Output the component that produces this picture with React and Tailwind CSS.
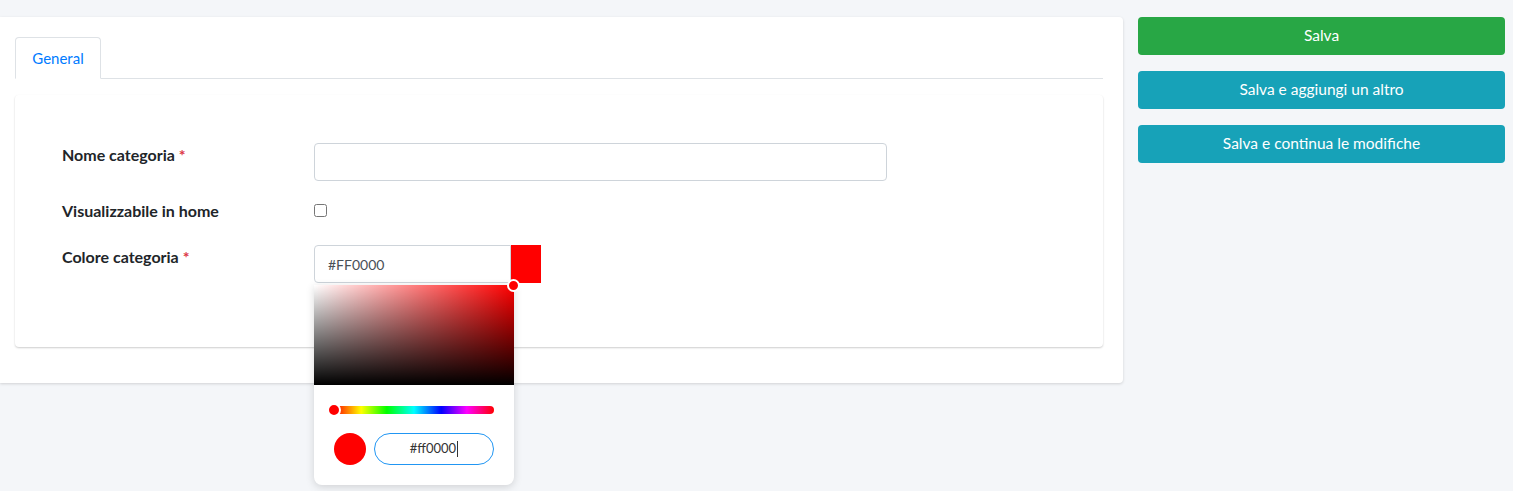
const font = { fontFamily: 'Lato, "Open Sans", sans-serif' }

function Field({ label, required, children, className = '' }) {
  return (
    <div className={`flex ${className}`}>
      <label className="w-[252px] shrink-0 text-[16px] font-bold text-[#212529]">
        {label}
        {required && <span className="text-[#dc3545]"> *</span>}
      </label>
      <div className="relative">{children}</div>
    </div>
  )
}

function ColorPicker() {
  return (
    <div className="absolute left-0 top-[40px] z-10 w-[200px] rounded-b-lg bg-white shadow-[0_2px_8px_rgba(0,0,0,0.15)]">
      {/* saturation / value area */}
      <div className="relative h-[100px] w-[200px] bg-[#ff0000]">
        <div className="absolute inset-0 bg-gradient-to-r from-white to-transparent" />
        <div className="absolute inset-0 bg-gradient-to-b from-transparent to-black" />
        <div className="absolute -right-[6px] -top-[6px] h-[13px] w-[13px] rounded-full border-2 border-white bg-[#ff0000]" />
      </div>

      {/* hue slider */}
      <div className="relative mx-[20px] mt-[21px] h-[8px] rounded-full bg-[linear-gradient(to_right,#f00_0%,#ff0_17%,#0f0_33%,#0ff_50%,#00f_67%,#f0f_83%,#f00_100%)]">
        <div className="absolute -left-[7px] -top-[3px] h-[14px] w-[14px] rounded-full border-2 border-white bg-[#ff0000]" />
      </div>

      <div className="flex items-center gap-[8px] px-[20px] pb-[20px] pt-[19px]">
        <div className="h-[32px] w-[32px] rounded-full bg-[#ff0000]" />
        <div className="flex h-[32px] w-[120px] items-center justify-center rounded-full border border-[#2196f3] text-[13px] text-[#333]">
          #ff0000<span className="ml-px inline-block h-[16px] w-px bg-[#333]" />
        </div>
      </div>
    </div>
  )
}

export default function App() {
  return (
    <div style={font} className="flex h-[491px] w-full gap-[15px] bg-[#f4f6f9] pt-[17px]">
      {/* Main card */}
      <div className="h-[366px] w-[1123px] shrink-0 rounded-r bg-white pl-[15px] pr-[20px] pt-[20px] shadow-[0_1px_3px_rgba(0,0,0,0.15)]">
        {/* Tabs */}
        <div className="flex border-b border-[#dee2e6]">
          <div className="-mb-px flex h-[42px] w-[86px] items-center justify-center rounded-t border border-[#dee2e6] border-b-white bg-white text-[15px] text-[#007bff]">
            General
          </div>
        </div>

        {/* Tab content */}
        <div className="mt-[16px] h-[252px] rounded bg-white pl-[47px] pt-[48px] shadow-[0_1px_2px_rgba(0,0,0,0.2)]">
          <Field label="Nome categoria" required>
            <input
              type="text"
              className="h-[38px] w-[573px] rounded border border-[#ced4da] bg-white px-3 outline-none"
            />
          </Field>

          <Field label="Visualizzabile in home" className="mt-[18px]">
            <input type="checkbox" className="mt-[4px] h-[13px] w-[13px]" />
          </Field>

          <Field label="Colore categoria" required className="mt-[22px]">
            <div className="flex">
              <div className="flex h-[38px] w-[197px] items-center rounded-l border border-[#ced4da] px-[13px] text-[14px] text-[#495057]">
                #FF0000
              </div>
              <div className="h-[38px] w-[30px] bg-[#ff0000]" />
            </div>
            <ColorPicker />
          </Field>
        </div>
      </div>

      {/* Actions */}
      <div className="flex w-[367px] flex-col gap-[16px]">
        <button className="h-[38px] rounded bg-[#28a745] text-[15.5px] text-white">Salva</button>
        <button className="h-[38px] rounded bg-[#17a2b8] text-[15.5px] text-white">Salva e aggiungi un altro</button>
        <button className="h-[38px] rounded bg-[#17a2b8] text-[15.5px] text-white">Salva e continua le modifiche</button>
      </div>
    </div>
  )
}
